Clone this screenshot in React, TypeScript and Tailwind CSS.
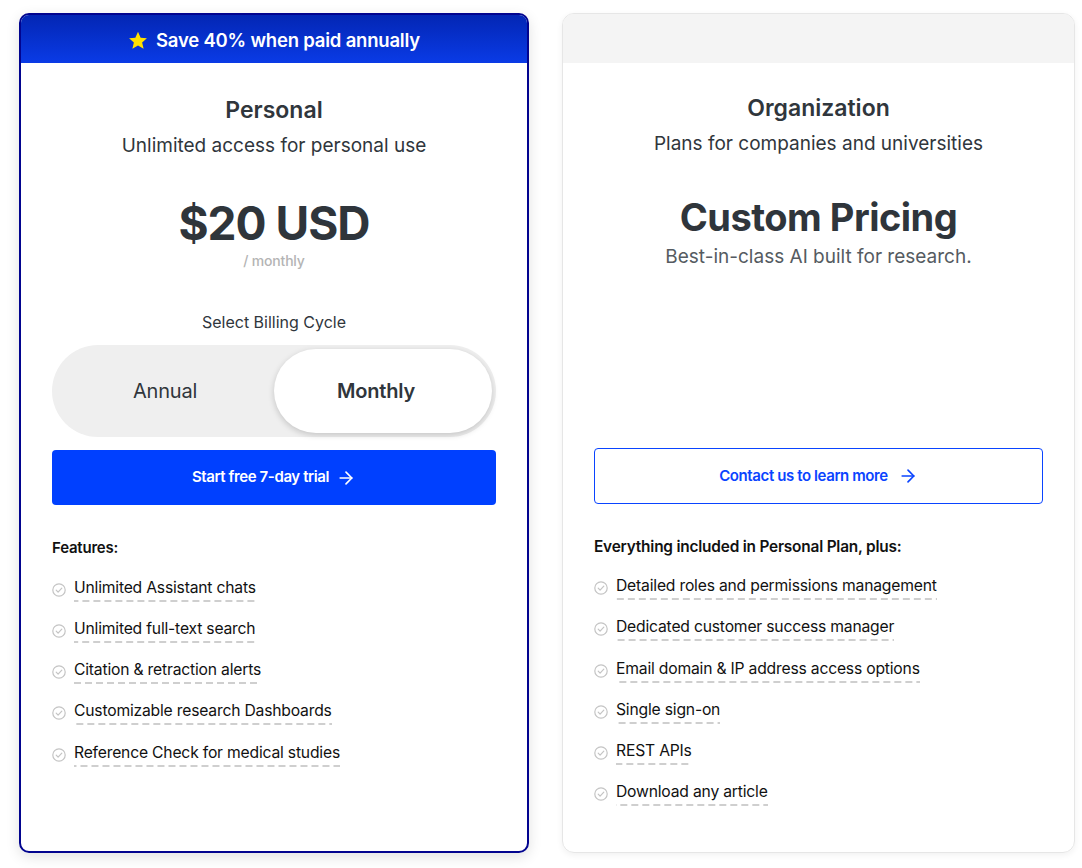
import { ArrowRight } from "lucide-react"

const personalFeatures = [
  "Unlimited Assistant chats",
  "Unlimited full-text search",
  "Citation & retraction alerts",
  "Customizable research Dashboards",
  "Reference Check for medical studies",
]

const orgFeatures = [
  "Detailed roles and permissions management",
  "Dedicated customer success manager",
  "Email domain & IP address access options",
  "Single sign-on",
  "REST APIs",
  "Download any article",
]

function CheckIcon() {
  return (
    <svg width="14" height="14" viewBox="0 0 14 14" fill="none" className="shrink-0">
      <circle cx="7" cy="7" r="6.2" stroke="#c4c4c4" strokeWidth="1.2" />
      <path d="M4.2 7.2l1.9 1.9 3.7-3.9" stroke="#c4c4c4" strokeWidth="1.2" strokeLinecap="round" strokeLinejoin="round" />
    </svg>
  )
}

function Star() {
  return (
    <svg width="20" height="19" viewBox="0 0 24 23">
      <path d="M12 1l3.2 7.1 7.6.7-5.8 5.1 1.8 7.6L12 17.5l-6.8 4 1.8-7.6L1.2 8.8l7.6-.7z" fill="#ffe100" />
    </svg>
  )
}

function FeatureList({ items }: { items: string[] }) {
  return (
    <ul className="flex flex-col gap-[17.25px] mt-[18px]">
      {items.map((item) => (
        <li key={item} className="flex items-center gap-2">
          <CheckIcon />
          <span className="pb-[5px] text-[15.7px] leading-[19px] tracking-[-0.2px] text-[#111] bg-[linear-gradient(to_right,#cfcfcf_7px,transparent_7px)] bg-[length:11px_2px] bg-repeat-x bg-bottom">
            {item}
          </span>
        </li>
      ))}
    </ul>
  )
}

export default function App() {
  return (
    <div className="min-h-[868px] bg-white pt-[13px] pl-[19px] flex gap-[33px] font-['Inter',sans-serif]">
      {/* Personal plan */}
      <div className="w-[510px] h-[840px] rounded-[10px] border-2 border-[#02048f] overflow-hidden shadow-[0_4px_14px_rgba(0,0,0,0.12)] flex flex-col">
        <div className="h-[48px] pt-[3px] bg-[linear-gradient(to_bottom,#0326b4,#0a3be6)] flex items-center justify-center gap-2">
          <Star />
          <span className="text-white text-[18.5px] font-semibold tracking-[-0.2px]">Save 40% when paid annually</span>
        </div>
        <div className="px-[31px] pt-[33px] flex flex-col">
          <h2 className="text-center text-[23px] leading-[28px] font-semibold text-[#30363c]">Personal</h2>
          <p className="text-center text-[19px] leading-[24px] mt-[10px] text-[#30363c]">Unlimited access for personal use</p>
          <div className="text-center text-[46px] leading-[46px] font-bold text-[#2f353b] mt-[42px] tracking-[-1px]">$20 USD</div>
          <div className="text-center text-[14px] leading-[16px] mt-[7px] font-medium text-[#b4b4b4] tracking-[-0.2px]">/ monthly</div>
          <p className="text-center text-[16px] leading-[20px] text-[#30363c] mt-[43px]">Select Billing Cycle</p>
          <div className="mt-[13px] h-[92px] rounded-full bg-[#efefef] flex items-center p-[4px]">
            <div className="flex-1 text-center text-[20px] text-[#30363c] tracking-[-0.2px]">Annual</div>
            <div className="w-[218px] h-[84px] pr-[14px] rounded-full bg-white shadow-[0_2px_6px_rgba(0,0,0,0.18)] flex items-center justify-center text-[20px] font-semibold text-[#30363c] tracking-[-0.2px]">
              Monthly
            </div>
          </div>
          <button className="mt-[13px] h-[55px] rounded-[4px] bg-[#0040ff] text-white text-[15px] font-semibold tracking-[-0.4px] flex items-center justify-center gap-[7px]">
            Start free 7-day trial
            <ArrowRight size={20} strokeWidth={2} />
          </button>
          <h3 className="mt-[32px] text-[15px] font-semibold text-[#111] tracking-[-0.2px]">Features:</h3>
          <FeatureList items={personalFeatures} />
        </div>
      </div>

      {/* Organization plan */}
      <div className="w-[513px] h-[840px] rounded-[12px] border border-[#e6e6e6] overflow-hidden shadow-[0_2px_6px_rgba(0,0,0,0.06)] flex flex-col">
        <div className="h-[49px] bg-[#f4f4f4]" />
        <div className="px-[31px] pt-[31px] flex flex-col">
          <h2 className="text-center text-[23px] leading-[28px] font-semibold text-[#30363c]">Organization</h2>
          <p className="text-center text-[19px] leading-[24px] mt-[10px] text-[#30363c]">Plans for companies and universities</p>
          <div className="text-center text-[38px] leading-[44px] font-bold text-[#2f353b] mt-[39px] tracking-[-0.5px]">Custom Pricing</div>
          <p className="text-center text-[19px] leading-[24px] mt-[6px] text-[#555b61]">Best-in-class AI built for research.</p>
          <button className="mt-[179px] h-[56px] rounded-[4px] border border-[#0a44ff] bg-white text-[#0a44ff] text-[15px] font-semibold tracking-[-0.4px] flex items-center justify-center gap-[10px]">
            Contact us to learn more
            <ArrowRight size={20} strokeWidth={2} />
          </button>
          <h3 className="mt-[31px] text-[15.4px] font-semibold text-[#111] tracking-[-0.2px]">Everything included in Personal Plan, plus:</h3>
          <FeatureList items={orgFeatures} />
        </div>
      </div>
    </div>
  )
}
